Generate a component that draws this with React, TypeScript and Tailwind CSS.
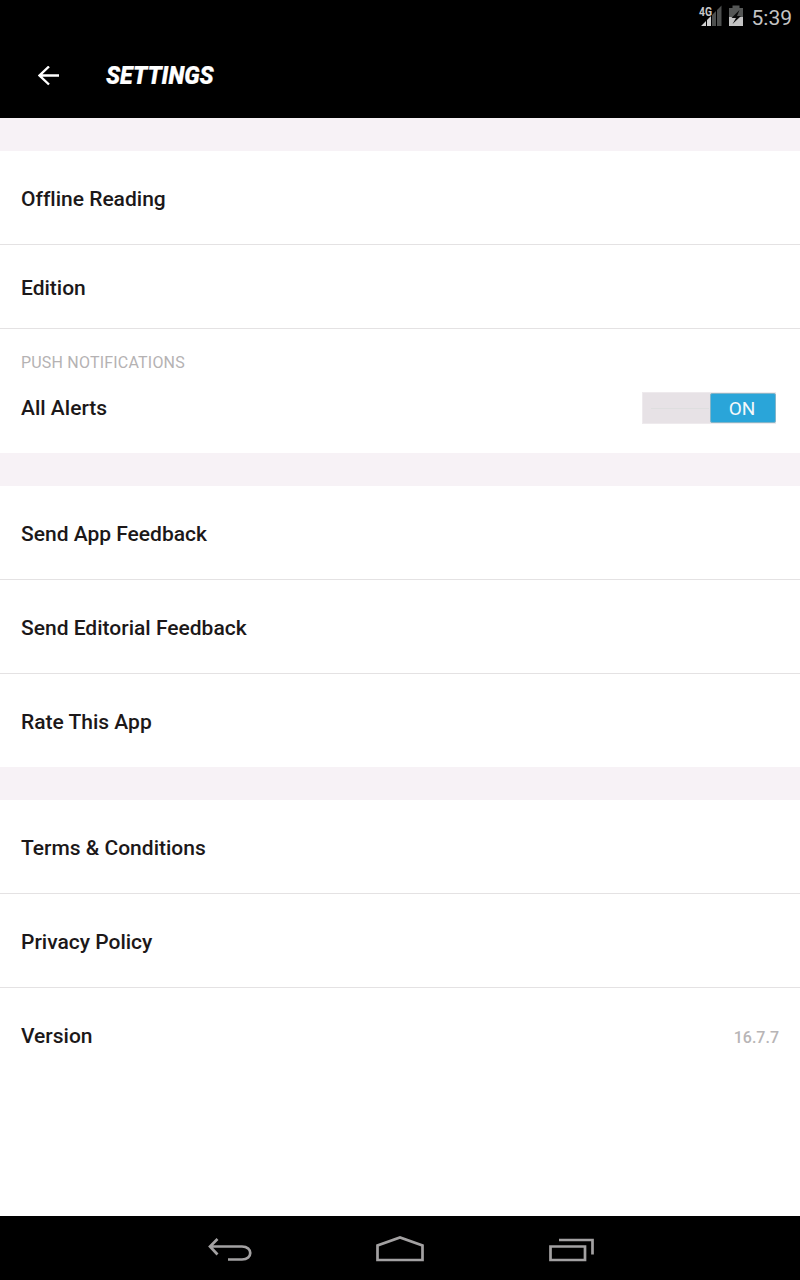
import React from "react";

function Row({ label, height, children, border = true }: { label: string; height: string; children?: React.ReactNode; border?: boolean }) {
  return (
    <div className={`flex items-center justify-between px-[21px] pt-[3px] ${height} ${border ? "border-b border-[#e4e2e3]" : ""}`}>
      <span className="text-[21px] leading-6 font-medium text-[#1c1819] [font-variant-ligatures:none]">{label}</span>
      {children}
    </div>
  );
}

const Gap = () => <div className="h-[33px] bg-[#f7f2f6]" />;

export default function App() {
  return (
    <div className="flex h-[1280px] w-[800px] flex-col overflow-hidden bg-white font-[Roboto,sans-serif]">
      <header className="h-[118px] bg-black">
        <div className="flex h-[33px] items-start justify-end pr-[8px] pt-[3px]">
          <svg width="46" height="24" viewBox="698 3 46 24" className="mr-[8px]">
            <path d="M701 26L706 21V26Z M707 20L711 16V26H707Z" fill="#d0d0d0" />
            <path d="M712 15L716 11V26H712Z M717 10L721.500 5.500V26H717Z" fill="#4d4f4e" />
            <text x="699" y="15.5" fontSize="12.500" fontWeight="700" fill="#c8c8c8" stroke="#000" strokeWidth="1" paintOrder="stroke" textLength="13" lengthAdjust="spacingAndGlyphs">4G</text>
            <path d="M729 8H732.500V5.500H739.500V8H743V17H729Z" fill="#555756" />
            <path d="M729 17H743V26H729Z" fill="#c4c4c4" />
            <path d="M739.500 10L731.500 18H736L732.500 24L741 16H737Z" fill="#0c0c0c" />
          </svg>
          <span className="pt-[3px] text-[21px] leading-6 text-[#c4c4c4]">5:39</span>
        </div>
        <div className="flex h-[85px] items-center pl-[38px]">
          <svg width="21" height="20" viewBox="0 0 21 20" fill="none" stroke="white" strokeWidth="2.4"><path d="M11 .5L1.500 9.500L11 18.500M2 9.500H21" /></svg>
          <h1 className="ml-[47px] mt-px origin-left scale-x-[.93] text-[25px] font-black italic text-white [-webkit-text-stroke:0.2px_white]">SETTINGS</h1>
        </div>
      </header>
      <main className="flex-1">
        <Gap />
        <Row label="Offline Reading" height="h-[94px]" />
        <Row label="Edition" height="h-[84px]" />
        <section className="flex h-[124px] flex-col px-[21px] pt-[24px]">
          <h2 className="text-[16px] leading-5 tracking-[0.2px] text-[#b5b2b3]">PUSH NOTIFICATIONS</h2>
          <div className="mt-[18px] flex h-[34px] items-center justify-between">
            <span className="text-[21px] leading-6 font-medium text-[#1c1819]">All Alerts</span>
            <div className="mr-[3px] flex h-[32px] w-[134px] items-center justify-end border-y border-l border-[#eeeaed] bg-[#e7e2e6]">
              <span className="mr-auto ml-[8px] h-px w-[58px] bg-[#dededf]" />
              <span className="flex h-[30px] w-[66px] items-center justify-center rounded-[2px] border border-[#83b5c9] bg-[#2aa5d9] pt-[2px] pr-[2px] text-[19px] leading-6 text-[#f4f8fa]">ON</span>
            </div>
          </div>
        </section>
        <Gap />
        <Row label="Send App Feedback" height="h-[94px]" />
        <Row label="Send Editorial Feedback" height="h-[94px]" />
        <Row label="Rate This App" height="h-[93px]" border={false} />
        <Gap />
        <Row label="Terms & Conditions" height="h-[94px]" />
        <Row label="Privacy Policy" height="h-[94px]" />
        <Row label="Version" height="h-[93px]" border={false}><span className="pt-[3px] text-[16px] leading-6 font-medium text-[#b8b5b6]">16.7.7</span></Row>
      </main>
      <nav className="h-[64px] bg-black">
        <svg width="800" height="64" viewBox="0 1216 800 64" fill="none" stroke="#a3a1a2" strokeWidth="2.7">
          <path d="M217.500 1239L210 1246.500L217.500 1254.500M210 1246.500H242C253 1246.500 253 1259.500 242 1259.500H228" />
          <path d="M377.500 1260V1245.500L400 1237.500L422.500 1245.500V1260Z" />
          <path d="M550.500 1246.500H585V1260H550.500ZM559 1240H592.500V1254.500" />
        </svg>
      </nav>
    </div>
  );
}
